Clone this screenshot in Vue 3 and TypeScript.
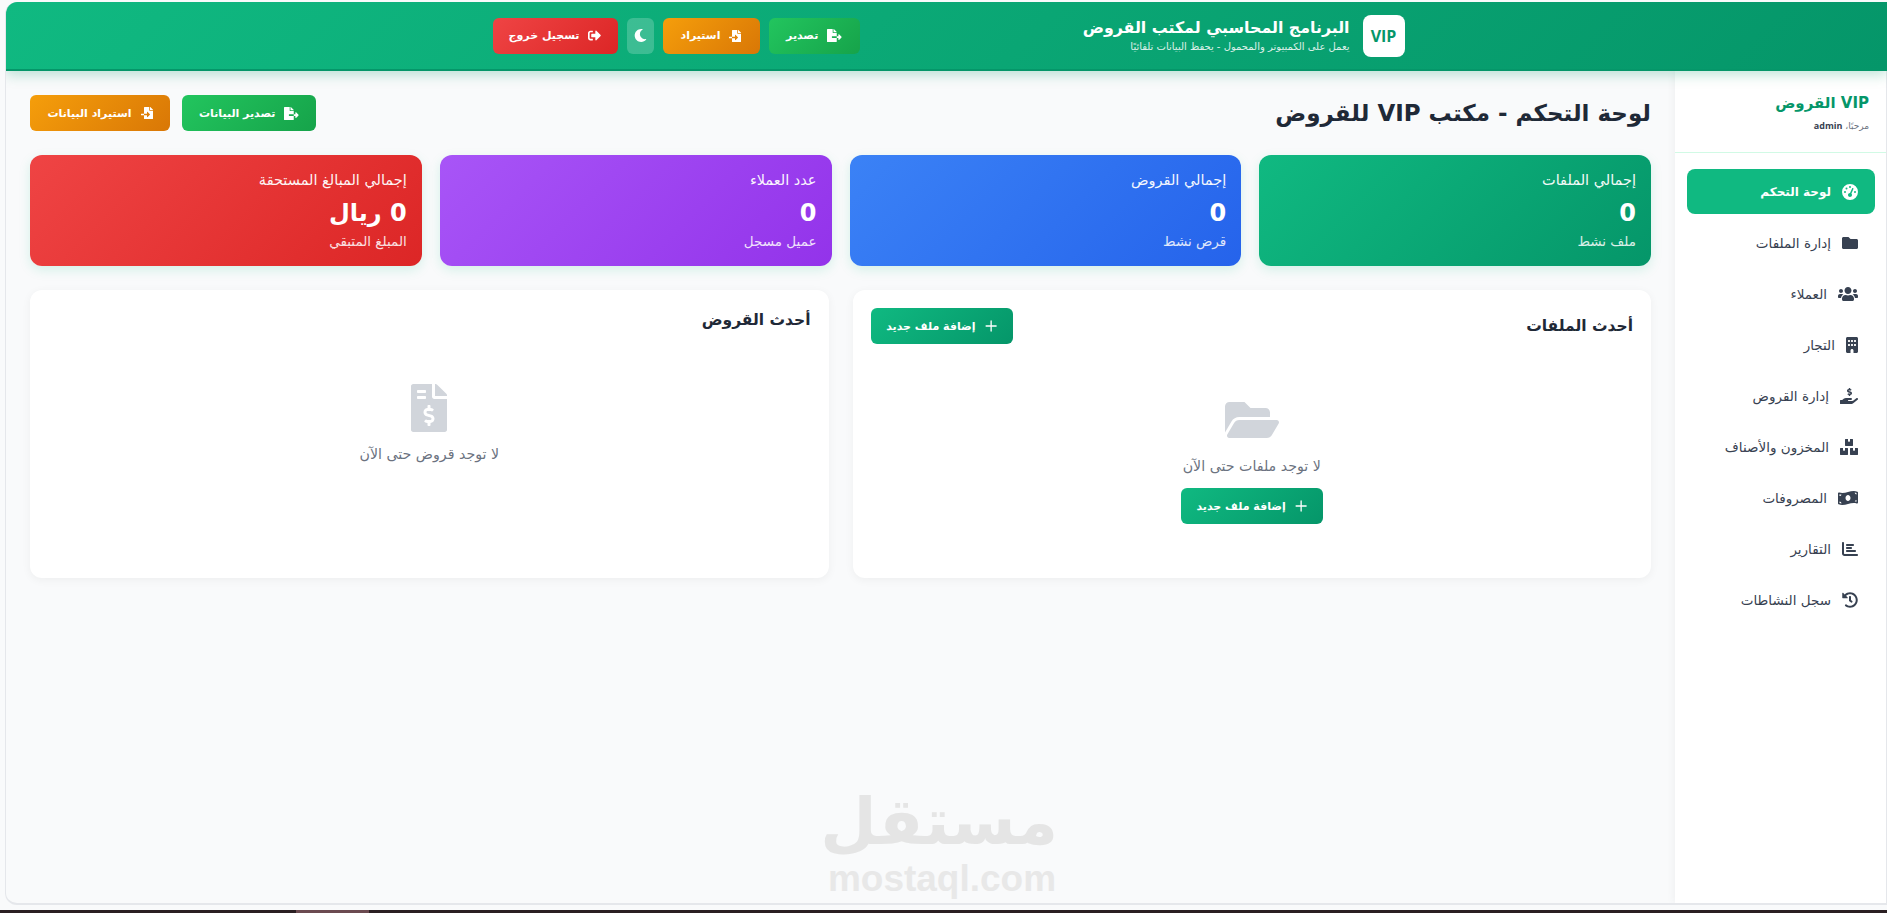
<script setup lang="ts">
interface Icon { w: number; d: string }
const ic: Record<string, Icon> = {
  gauge: { w: 512, d: 'M0 256a256 256 0 1 1 512 0A256 256 0 1 1 0 256zM288 96a32 32 0 1 0 -64 0 32 32 0 1 0 64 0zM256 416c35.3 0 64-28.7 64-64c0-17.4-6.9-33.1-18.1-44.6L366 161.7c5.3-12.1-.2-26.3-12.3-31.6s-26.3 .2-31.6 12.3L257.9 288c-.6 0-1.3 0-1.9 0c-35.3 0-64 28.7-64 64s28.7 64 64 64zM176 144a32 32 0 1 0 -64 0 32 32 0 1 0 64 0zM96 288a32 32 0 1 0 0-64 32 32 0 1 0 0 64zm352-32a32 32 0 1 0 -64 0 32 32 0 1 0 64 0z' },
  folder: { w: 512, d: 'M464 128H272l-64-64H48C21.49 64 0 85.49 0 112v288c0 26.51 21.49 48 48 48h416c26.51 0 48-21.49 48-48V176c0-26.51-21.49-48-48-48z' },
  folderOpen: { w: 576, d: 'M572.694 292.093L500.27 416.248A63.997 63.997 0 0 1 444.989 448H45.025c-18.523 0-30.064-20.093-20.731-36.093l72.424-124.155A64 64 0 0 1 152 256h399.964c18.523 0 30.064 20.093 20.73 36.093zM152 224h328v-48c0-26.51-21.49-48-48-48H272l-64-64H48C21.49 64 0 85.49 0 112v278.046l69.077-118.418C86.214 242.25 117.989 224 152 224z' },
  users: { w: 640, d: 'M96 224c35.3 0 64-28.7 64-64s-28.7-64-64-64-64 28.7-64 64 28.7 64 64 64zm448 0c35.3 0 64-28.7 64-64s-28.7-64-64-64-64 28.7-64 64 28.7 64 64 64zm32 32h-64c-17.6 0-33.5 7.1-45.1 18.6 40.3 22.1 68.9 62 75.1 109.4h66c17.7 0 32-14.3 32-32v-32c0-35.3-28.7-64-64-64zm-256 0c61.9 0 112-50.1 112-112S381.9 32 320 32 208 82.1 208 144s50.1 112 112 112zm76.8 32h-8.3c-20.8 10-43.9 16-68.5 16s-47.6-6-68.5-16h-8.3C179.6 288 128 339.6 128 403.2V432c0 26.5 21.5 48 48 48h288c26.5 0 48-21.5 48-48v-28.8c0-63.6-51.6-115.2-115.2-115.2zm-223.7-13.4C161.5 263.1 145.6 256 128 256H64c-35.3 0-64 28.7-64 64v32c0 17.7 14.3 32 32 32h65.9c6.3-47.4 34.9-87.3 75.2-109.4z' },
  building: { w: 384, d: 'M48 0C21.5 0 0 21.5 0 48V464c0 26.5 21.5 48 48 48h96V432c0-26.5 21.5-48 48-48s48 21.5 48 48v80h96c26.5 0 48-21.5 48-48V48c0-26.5-21.5-48-48-48H48zM64 240c0-8.8 7.2-16 16-16h32c8.8 0 16 7.2 16 16v32c0 8.8-7.2 16-16 16H80c-8.8 0-16-7.2-16-16V240zm112-16h32c8.8 0 16 7.2 16 16v32c0 8.8-7.2 16-16 16H176c-8.8 0-16-7.2-16-16V240c0-8.8 7.2-16 16-16zm80 16c0-8.8 7.2-16 16-16h32c8.8 0 16 7.2 16 16v32c0 8.8-7.2 16-16 16H272c-8.8 0-16-7.2-16-16V240zM80 96h32c8.8 0 16 7.2 16 16v32c0 8.8-7.2 16-16 16H80c-8.8 0-16-7.2-16-16V112c0-8.8 7.2-16 16-16zm80 16c0-8.8 7.2-16 16-16h32c8.8 0 16 7.2 16 16v32c0 8.8-7.2 16-16 16H176c-8.8 0-16-7.2-16-16V112zM272 96h32c8.8 0 16 7.2 16 16v32c0 8.8-7.2 16-16 16H272c-8.8 0-16-7.2-16-16V112c0-8.8 7.2-16 16-16z' },
  hand: { w: 576, d: 'M271.06,144.3l54.27,14.3a8.59,8.59,0,0,1,6.63,8.1c0,4.6-4.09,8.4-9.12,8.4h-35.6a30,30,0,0,1-11.19-2.2c-5.24-2.2-11.28-1.7-15.3,2l-19,17.5a11.68,11.68,0,0,0-2.25,2.66,11.42,11.42,0,0,0,3.88,15.74,83.42,83.42,0,0,0,34.51,11.5V240c0,8.8,7.83,16,17.37,16h17.37c9.55,0,17.38-7.2,17.38-16V221.9c32.93-3.6,57.84-31,53.5-63-3.15-23-22.46-41.3-46.56-47.7L282.68,97.4a8.59,8.59,0,0,1-6.63-8.1c0-4.6,4.09-8.4,9.12-8.4h35.6A30,30,0,0,1,332,83.1c5.23,2.2,11.28,1.7,15.3-2l19-17.5A11.31,11.31,0,0,0,368.47,61a11.43,11.43,0,0,0-3.84-15.78,83.82,83.82,0,0,0-34.52-11.5V16c0-8.8-7.82-16-17.37-16H295.37C285.82,0,278,7.2,278,16V34.1c-32.89,3.6-57.85,31-53.51,63C227.63,120.1,247,138.5,271.06,144.3ZM565.27,328.1c-11.8-10.7-30.2-10-42.6,0L430.27,402a63.64,63.64,0,0,1-40,14H272a16,16,0,0,1,0-32h78.29c15.9,0,30.71-10.9,33.25-26.6a31.2,31.2,0,0,0,.46-5.46A32,32,0,0,0,352,320H192a117.66,117.66,0,0,0-74.1,26.29L71.4,384H16A16,16,0,0,0,0,400v96a16,16,0,0,0,16,16H372.77a64,64,0,0,0,40-14L564,377a32,32,0,0,0,1.27-48.9Z' },
  boxes: { w: 576, d: 'M560 288h-80v96l-32-21.3-32 21.3v-96h-80c-8.8 0-16 7.2-16 16v192c0 8.8 7.2 16 16 16h224c8.8 0 16-7.2 16-16V304c0-8.8-7.2-16-16-16zm-384-64h224c8.8 0 16-7.2 16-16V16c0-8.8-7.2-16-16-16h-80v96l-32-21.3L256 96V0h-80c-8.8 0-16 7.2-16 16v192c0 8.8 7.2 16 16 16zm64 64h-80v96l-32-21.3L96 384v-96H16c-8.8 0-16 7.2-16 16v192c0 8.8 7.2 16 16 16h224c8.8 0 16-7.2 16-16V304c0-8.8-7.2-16-16-16z' },
  money: { w: 640, d: 'M621.16 54.46C582.37 38.19 543.55 32 504.75 32c-123.17-.01-246.33 62.34-369.5 62.34-30.89 0-61.76-3.92-92.65-13.72-3.47-1.1-6.95-1.62-10.35-1.62C15.04 79 0 92.32 0 110.81v317.26c0 12.63 7.23 24.6 18.84 29.46C57.63 473.81 96.45 480 135.25 480c123.17 0 246.34-62.35 369.51-62.35 30.89 0 61.76 3.92 92.65 13.72 3.47 1.1 6.95 1.62 10.35 1.62 17.21 0 32.25-13.32 32.25-31.81V83.93c-.01-12.64-7.24-24.6-18.85-29.47zM48 132.22c20.12 5.04 41.12 7.57 62.72 8.93C104.84 170.54 79 192.69 48 192.69v-60.47zm0 285v-47.78c34.37 0 62.18 27.27 63.71 61.4-22.53-1.81-43.59-6.31-63.71-13.62zM320 352c-44.19 0-80-42.99-80-96 0-53.02 35.82-96 80-96s80 42.98 80 96c0 53.03-35.83 96-80 96zm272 27.78c-17.52-4.39-35.71-6.85-54.32-8.44 5.87-26.08 27.5-45.88 54.32-49.28v57.72zm0-236.11c-30.89-3.91-54.86-29.7-55.81-61.55 19.54 2.17 38.09 6.23 55.81 12.66v48.89z' },
  chart: { w: 512, d: 'M32 32c17.7 0 32 14.3 32 32V400c0 8.8 7.2 16 16 16H480c17.7 0 32 14.3 32 32s-14.3 32-32 32H80c-44.2 0-80-35.8-80-80V64C0 46.3 14.3 32 32 32zm96 96c0-17.7 14.3-32 32-32l192 0c17.7 0 32 14.3 32 32s-14.3 32-32 32l-192 0c-17.7 0-32-14.3-32-32zm32 64H288c17.7 0 32 14.3 32 32s-14.3 32-32 32H160c-17.7 0-32-14.3-32-32s14.3-32 32-32zm0 96H416c17.7 0 32 14.3 32 32s-14.3 32-32 32H160c-17.7 0-32-14.3-32-32s14.3-32 32-32z' },
  history: { w: 512, d: 'M504 255.531c.253 136.64-111.18 248.372-247.82 248.468-59.015.042-113.223-20.53-155.822-54.911-11.077-8.94-11.905-25.541-1.839-35.607l11.267-11.267c8.609-8.609 22.353-9.551 31.891-1.984C173.062 425.135 212.781 440 256 440c101.705 0 184-82.311 184-184 0-101.705-82.311-184-184-184-48.814 0-93.149 18.969-126.068 49.932l50.754 50.754c10.08 10.08 2.941 27.314-11.313 27.314H24c-8.837 0-16-7.163-16-16V38.627c0-14.254 17.234-21.393 27.314-11.314l49.372 49.372C129.209 34.136 189.552 8 256 8c136.81 0 247.747 110.78 248 247.531zm-180.912 78.784l9.823-12.63c8.138-10.463 6.253-25.542-4.21-33.679L288 256.349V152c0-13.255-10.745-24-24-24h-16c-13.255 0-24 10.745-24 24v135.651l65.409 50.874c10.463 8.137 25.541 6.253 33.679-4.21z' },
  exportF: { w: 576, d: 'M384 121.9c0-6.3-2.5-12.4-7-16.9L279.1 7c-4.5-4.5-10.6-7-17-7H256v128h128zM571 308l-95.7-96.4c-10.1-10.2-27.4-3-27.4 11.3V288h-64v64h64v65.2c0 14.3 17.3 21.4 27.4 11.3L571 332c6.6-6.6 6.6-17.4 0-24zm-379 28v-32c0-8.8 7.2-16 16-16h176V160H248c-13.2 0-24-10.8-24-24V0H24C10.7 0 0 10.7 0 24v464c0 13.3 10.7 24 24 24h336c13.3 0 24-10.7 24-24V352H208c-8.8 0-16-7.2-16-16z' },
  importF: { w: 512, d: 'M16 288c-8.8 0-16 7.2-16 16v32c0 8.8 7.2 16 16 16h112v-64H16zm336-152V0H152c-13.3 0-24 10.7-24 24v264h127.99v-65.18c0-14.28 17.29-21.41 27.36-11.27l95.7 96.43c6.6 6.65 6.6 17.39 0 24.04l-95.7 96.42c-10.06 10.14-27.36 3.01-27.36-11.27V352H128v136c0 13.3 10.7 24 24 24h336c13.3 0 24-10.7 24-24V160H376c-13.2 0-24-10.8-24-24zm153-31L407.1 7c-4.5-4.5-10.6-7-17-7H384v128h128v-6.1c0-6.3-2.5-12.4-7-16.9z' },
  moon: { w: 512, d: 'M283.211 512c78.962 0 151.079-35.925 198.857-94.792 7.068-8.708-.639-21.43-11.562-19.35-124.203 23.654-238.262-71.576-238.262-196.954 0-72.222 38.662-138.635 101.498-174.394 9.686-5.512 7.25-20.197-3.756-22.23A258.156 258.156 0 0 0 283.211 0c-141.309 0-256 114.511-256 256 0 141.309 114.511 256 256 256z' },
  signOut: { w: 512, d: 'M497 273L329 441c-15 15-41 4.5-41-17v-96H152c-13.3 0-24-10.7-24-24v-96c0-13.3 10.7-24 24-24h136V88c0-21.4 25.9-32 41-17l168 168c9.3 9.4 9.3 24.6 0 34zM192 436v-40c0-6.6-5.4-12-12-12H96c-17.7 0-32-14.3-32-32V160c0-17.7 14.3-32 32-32h84c6.6 0 12-5.4 12-12V76c0-6.6-5.4-12-12-12H96c-53 0-96 43-96 96v192c0 53 43 96 96 96h84c6.6 0 12-5.4 12-12z' },
  plus: { w: 448, d: 'M248 72c0-13.3-10.7-24-24-24s-24 10.7-24 24V232H40c-13.3 0-24 10.7-24 24s10.7 24 24 24H200V440c0 13.3 10.7 24 24 24s24-10.7 24-24V280H408c13.3 0 24-10.7 24-24s-10.7-24-24-24H248V72z' },
  invoice: { w: 384, d: 'M377 105L279.1 7c-4.5-4.5-10.6-7-17-7H256v128h128v-6.1c0-6.3-2.5-12.4-7-16.9zm-153 31V0H24C10.7 0 0 10.7 0 24v464c0 13.3 10.7 24 24 24h336c13.3 0 24-10.7 24-24V160H248c-13.2 0-24-10.8-24-24zM64 72c0-4.42 3.58-8 8-8h80c4.42 0 8 3.58 8 8v16c0 4.42-3.58 8-8 8H72c-4.42 0-8-3.58-8-8V72zm0 80v-16c0-4.42 3.58-8 8-8h80c4.42 0 8 3.58 8 8v16c0 4.42-3.58 8-8 8H72c-4.42 0-8-3.58-8-8zm144 263.88V440c0 4.42-3.58 8-8 8h-16c-4.42 0-8-3.58-8-8v-24.29c-11.29-.58-22.27-4.52-31.37-11.35-3.9-2.93-4.1-8.77-.57-12.14l11.75-11.21c2.77-2.64 6.89-2.76 10.13-.73 3.87 2.42 8.26 3.72 12.82 3.72h28.11c6.5 0 11.8-5.92 11.8-13.19 0-5.95-3.61-11.19-8.77-12.73l-45-13.5c-18.59-5.58-31.58-23.42-31.58-43.39 0-24.52 19.05-44.44 42.67-45.07V232c0-4.42 3.58-8 8-8h16c4.42 0 8 3.58 8 8v24.29c11.29.58 22.27 4.51 31.37 11.35 3.9 2.93 4.1 8.77.57 12.14l-11.75 11.21c-2.77 2.64-6.89 2.76-10.13.73-3.87-2.43-8.26-3.72-12.82-3.72h-28.11c-6.5 0-11.8 5.92-11.8 13.19 0 5.95 3.61 11.19 8.77 12.73l45 13.5c18.59 5.58 31.58 23.42 31.58 43.39 0 24.53-19.05 44.44-42.67 45.07z' }
}
const vb = (k: string) => `0 0 ${ic[k].w} 512`
const iw = (k: string, size: number) => ({ width: `${(ic[k].w / 512) * size}px`, height: `${size}px` })

const nav = [
  { label: 'لوحة التحكم', icon: 'gauge', active: true },
  { label: 'إدارة الملفات', icon: 'folder' },
  { label: 'العملاء', icon: 'users' },
  { label: 'التجار', icon: 'building' },
  { label: 'إدارة القروض', icon: 'hand' },
  { label: 'المخزون والأصناف', icon: 'boxes' },
  { label: 'المصروفات', icon: 'money' },
  { label: 'التقارير', icon: 'chart' },
  { label: 'سجل النشاطات', icon: 'history' }
]
const stats = [
  { label: 'إجمالي الملفات', value: '0', sub: 'ملف نشط', cls: 'green' },
  { label: 'إجمالي القروض', value: '0', sub: 'قرض نشط', cls: 'blue' },
  { label: 'عدد العملاء', value: '0', sub: 'عميل مسجل', cls: 'purple' },
  { label: 'إجمالي المبالغ المستحقة', value: '0 ريال', sub: 'المبلغ المتبقي', cls: 'red' }
]
</script>

<template>
  <div class="page" dir="rtl">
    <div class="shell">
      <header class="topbar">
        <div class="topbar-inner">
          <div class="brand">
            <div class="logo">VIP</div>
            <div>
              <h1>البرنامج المحاسبي لمكتب القروض</h1>
              <p>يعمل على الكمبيوتر والمحمول - يحفظ البيانات تلقائيًا</p>
            </div>
          </div>
          <div class="actions">
            <button class="btn export w91"><svg :viewBox="vb('exportF')" :style="iw('exportF', 13)"><path :d="ic.exportF.d" /></svg>تصدير</button>
            <button class="btn import w97"><svg :viewBox="vb('importF')" :style="iw('importF', 12)"><path :d="ic.importF.d" /></svg>استيراد</button>
            <button class="btn moon"><svg :viewBox="vb('moon')" :style="iw('moon', 13)"><path :d="ic.moon.d" /></svg></button>
            <button class="btn logout"><svg :viewBox="vb('signOut')" :style="iw('signOut', 13)"><path :d="ic.signOut.d" /></svg>تسجيل خروج</button>
          </div>
        </div>
      </header>
      <div class="body">
        <aside class="sidebar">
          <div class="side-head">
            <h2>VIP القروض</h2>
            <p>مرحبًا، <b>admin</b></p>
          </div>
          <nav class="nav">
            <a v-for="n in nav" :key="n.label" class="nav-item" :class="{ active: n.active }">
              <svg :viewBox="vb(n.icon)" :style="iw(n.icon, 16)"><path :d="ic[n.icon].d" /></svg>
              <span>{{ n.label }}</span>
            </a>
          </nav>
        </aside>
        <main class="main">
          <div class="title-row">
            <h2>لوحة التحكم - مكتب VIP للقروض</h2>
            <div class="title-actions">
              <button class="btn export"><svg :viewBox="vb('exportF')" :style="iw('exportF', 13)"><path :d="ic.exportF.d" /></svg>تصدير البيانات</button>
              <button class="btn import"><svg :viewBox="vb('importF')" :style="iw('importF', 12)"><path :d="ic.importF.d" /></svg>استيراد البيانات</button>
            </div>
          </div>
          <div class="stats">
            <div v-for="s in stats" :key="s.label" class="stat" :class="s.cls">
              <div class="stat-label">{{ s.label }}</div>
              <div class="stat-value">{{ s.value }}</div>
              <div class="stat-sub">{{ s.sub }}</div>
            </div>
          </div>
          <div class="cards">
            <section class="card">
              <div class="card-head">
                <h3>أحدث الملفات</h3>
                <button class="btn primary"><svg :viewBox="vb('plus')" :style="iw('plus', 14)"><path :d="ic.plus.d" /></svg>إضافة ملف جديد</button>
              </div>
              <div class="empty">
                <svg :viewBox="vb('folderOpen')" :style="iw('folderOpen', 48)"><path :d="ic.folderOpen.d" /></svg>
                <p>لا توجد ملفات حتى الآن</p>
                <button class="btn primary"><svg :viewBox="vb('plus')" :style="iw('plus', 14)"><path :d="ic.plus.d" /></svg>إضافة ملف جديد</button>
              </div>
            </section>
            <section class="card">
              <div class="card-head slim">
                <h3>أحدث القروض</h3>
              </div>
              <div class="empty">
                <svg :viewBox="vb('invoice')" :style="iw('invoice', 48)"><path :d="ic.invoice.d" /></svg>
                <p>لا توجد قروض حتى الآن</p>
              </div>
            </section>
          </div>
        </main>
      </div>
      <div class="watermark" dir="rtl">
        <div class="wm-ar">مستقل</div>
        <div class="wm-en">mostaql.com</div>
      </div>
    </div>
    <div class="strip"><span></span></div>
  </div>
</template>

<style>
html, body { margin: 0; background: #f3f4f6; }
</style>

<style scoped>
* { box-sizing: border-box; }
.page {
  width: 1887px;
  height: 913px;
  display: flex;
  flex-direction: column;
  padding-top: 2px;
  overflow: hidden;
  background: #f9fafb;
  font-family: "DejaVu Sans", "Noto Sans", sans-serif;
  color: #1f2937;
}
.shell {
  position: relative;
  flex: 1;
  min-height: 0;
  margin-left: 5px;
  margin-bottom: 5px;
  display: flex;
  flex-direction: column;
  background: #f9fafb;
  border-left: 1px solid #e5e7eb;
  border-bottom: 2px solid #e5e7eb;
  border-radius: 12px 0 0 12px;
  overflow: hidden;
}
.strip {
  height: 3px;
  flex: none;
  background: #2a1f22;
  position: relative;
}
.strip span {
  position: absolute;
  left: 296px;
  width: 73px;
  top: 0;
  height: 3px;
  background: #6b4a50;
}
.topbar {
  height: 69px;
  flex: none;
  background: linear-gradient(135deg, #10b981, #059669);
  border-bottom: 2px solid #059669;
  box-shadow: 0 4px 12px rgba(5, 150, 105, 0.25);
  position: relative;
  z-index: 2;
  display: flex;
  justify-content: center;
  padding-left: 4px;
}
.topbar-inner {
  width: 912px;
  display: flex;
  justify-content: space-between;
  align-items: center;
}
.brand { display: flex; align-items: center; gap: 13px; color: #fff; }
.logo {
  width: 42px;
  height: 42px;
  border-radius: 8px;
  background: #fff;
  color: #059669;
  font-family: "Open Sans", sans-serif;
  font-weight: 700;
  font-size: 16px;
  display: flex;
  align-items: center;
  justify-content: center;
}
.brand h1 { margin: 0; font-size: 15.8px; font-weight: 700; line-height: 22px; }
.brand p { margin: 1px 0 0; font-size: 10px; line-height: 14px; opacity: 0.85; }
.actions { display: flex; gap: 9px; }
.btn {
  height: 36px;
  padding: 0 18px;
  border: 0;
  border-radius: 6px;
  display: inline-flex;
  align-items: center;
  justify-content: center;
  gap: 9px;
  color: #fff;
  font-family: inherit;
  font-weight: 700;
  font-size: 11px;
  white-space: nowrap;
}
.btn svg { fill: currentColor; flex: none; }
.export { background: linear-gradient(135deg, #22c55e, #16a34a); }
.import { background: linear-gradient(135deg, #f59e0b, #d97706); }
.logout { background: linear-gradient(135deg, #ef4444, #dc2626); width: 125px; padding: 0; }
.moon { background: rgba(255, 255, 255, 0.2); width: 27px; padding: 0; }
.w91 { width: 91px; padding: 0; }
.w97 { width: 97px; padding: 0; }
.primary { background: linear-gradient(135deg, #10b981, #059669); width: 142px; padding: 0; }

.body { flex: 1; min-height: 0; display: flex; }
.sidebar {
  width: 212px;
  flex: none;
  background: #fff;
  border-right: 1px solid #e5e7eb;
  box-shadow: -2px 0 8px rgba(0, 0, 0, 0.04);
}
.side-head {
  height: 82px;
  padding: 22px 17px 0 0;
  border-bottom: 1px solid #d1fae5;
}
.side-head h2 { margin: 0; font-size: 15px; line-height: 20px; font-weight: 700; color: #059669; }
.side-head p { margin: 6px 0 0; font-size: 9px; line-height: 14px; color: #6b7280; }
.side-head b { color: #374151; font-family: "Open Sans", sans-serif; }
.nav { padding: 16px 11px 0 12px; display: flex; flex-direction: column; gap: 6px; }
.nav-item {
  height: 45px;
  border-radius: 8px;
  padding: 0 17px;
  display: flex;
  align-items: center;
  gap: 11px;
  color: #374151;
  font-size: 13.5px;
}
.nav-item svg { fill: currentColor; flex: none; }
.nav-item.active { background: #10b981; color: #fff; font-weight: 700; font-size: 12px; }

.main { flex: 1; min-width: 0; padding: 24px 24px 0; }
.title-row { display: flex; justify-content: space-between; align-items: center; height: 36px; margin-bottom: 24px; }
.title-row h2 { margin: 0; font-size: 23px; font-weight: 700; color: #1f2937; }
.title-actions { display: flex; gap: 12px; }
.title-actions .export { width: 134px; padding: 0; }
.title-actions .import { width: 140px; padding: 0; }
.stats { display: grid; grid-template-columns: repeat(4, 1fr); gap: 18px; margin-bottom: 24px; }
.stat {
  height: 111px;
  border-radius: 12px;
  padding: 15px 15px;
  color: #fff;
  box-shadow: 0 4px 12px rgba(16, 185, 129, 0.15);
}
.stat.green { background: linear-gradient(135deg, #10b981, #059669); }
.stat.blue { background: linear-gradient(135deg, #3b82f6, #2563eb); }
.stat.purple { background: linear-gradient(135deg, #a855f7, #9333ea); }
.stat.red { background: linear-gradient(135deg, #ef4444, #dc2626); }
.stat-label { font-size: 14.5px; line-height: 20px; opacity: 0.95; }
.stat-value { margin-top: 3px; font-size: 24px; line-height: 40px; font-weight: 700; }
.stat-sub { font-size: 13.5px; line-height: 16px; opacity: 0.85; }
.cards { display: grid; grid-template-columns: 1fr 1fr; gap: 24px; }
.card {
  height: 288px;
  background: #fff;
  border-radius: 12px;
  padding: 18px;
  box-shadow: 0 2px 10px rgba(0, 0, 0, 0.05);
}
.card-head { display: flex; justify-content: space-between; align-items: center; height: 36px; margin-bottom: 16px; }
.card-head.slim { height: 24px; }
.card-head h3 { margin: 0; font-size: 15.5px; font-weight: 700; color: #1f2937; }
.empty { padding-top: 36px; display: flex; flex-direction: column; align-items: center; }
.empty > svg { fill: #d1d5db; }
.empty p { margin: 12px 0; font-size: 14.2px; line-height: 20px; color: #6b7280; }

.watermark {
  position: absolute;
  left: 820px;
  top: 782px;
  width: 232px;
  text-align: center;
  pointer-events: none;
}
.wm-ar { font-size: 65px; line-height: 76px; font-weight: 700; color: #e5e5e5; padding-left: 8px; }
.wm-en { font-family: "Liberation Sans", sans-serif; font-size: 37px; line-height: 38px; font-weight: 700; color: #e8e8e8; }
</style>
